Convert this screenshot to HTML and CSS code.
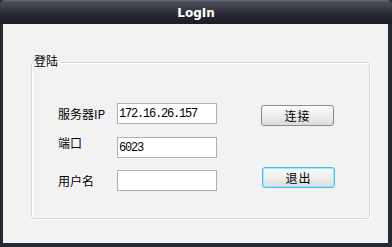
FILE: index.html
```html
<!DOCTYPE html>
<html>
	<head>
		<title>LogIn</title>
		<link rel="stylesheet" href="styles.css">
	</head>
	<body>
		<div class="window">
			<div class="titlebar">LogIn</div>
			<div class="client">
				<div class="group">
					<span class="legend">登陆</span>
					<div class="form">
						<span class="label">服务器IP</span>
						<input class="field" type="text" value="172.16.26.157">
						<button class="btn btn-top">连接</button>

						<span class="label label-up">端口</span>
						<input class="field" type="text" value="6023">
						<span></span>

						<span class="label">用户名</span>
						<input class="field" type="text" value="">
						<button class="btn btn-bottom focus">退出</button>
					</div>
				</div>
			</div>
		</div>
	</body>
</html>
```

FILE: styles.css
```css
html, body {
	margin: 0;
	padding: 0;
	background: #2a2c36;
}

.window {
	width: 392px;
	height: 247px;
	display: flex;
	flex-direction: column;
	background: #262831;
	border-radius: 5px 5px 0 0;
	overflow: hidden;
}

.titlebar {
	height: 24px;
	flex: none;
	display: flex;
	align-items: center;
	justify-content: center;
	background: linear-gradient(#6a6e7a 0px, #4a4d58 2px, #383b45 9px, #25272f 16px, #1c1d24 24px);
	color: #ffffff;
	font-family: "DejaVu Sans", sans-serif;
	font-weight: bold;
	font-size: 12px;
	padding-top: 1px;
	box-sizing: border-box;
}

.client {
	flex: 1;
	margin: 0 4px 4px 3px;
	background: #f2f2f2;
	padding: 38px 18px 0 28px;
}

.group {
	height: 155px;
	border: 1px solid #d6dadf;
	box-shadow: inset 1px 1px 0 #ffffff, 1px 1px 0 #ffffff;
	border-radius: 3px;
	font-family: "Noto Sans CJK SC", sans-serif;
	font-size: 12px;
	color: #000000;
}

.legend {
	display: block;
	width: fit-content;
	margin: -10px 0 0 1px;
	padding: 0 2px 0 1px;
	background: #f2f2f2;
	line-height: 16px;
}

.form {
	display: grid;
	grid-template-columns: 59px 144px 73px;
	grid-template-rows: 21px 21px 21px;
	row-gap: 12.5px;
	margin: 34px 0 0 26px;
	align-items: center;
}

.label {
	line-height: 14px;
}

.label-up {
	margin-top: -8px;
}

.field {
	box-sizing: border-box;
	width: 100px;
	height: 21px;
	margin: 0;
	border: 1px solid #a9b0b8;
	background: #ffffff;
	padding: 1px 0 0 1px;
	font-family: "Liberation Mono", monospace;
	font-size: 12px;
	letter-spacing: -1.2px;
	color: #000000;
	outline: none;
}

.btn {
	box-sizing: border-box;
	width: 73px;
	height: 21px;
	margin: 0;
	padding: 0;
	border: 1px solid #8c8c8c;
	border-radius: 3px;
	background: linear-gradient(#fbfbfb, #ededed 50%, #dcdcdc);
	font-family: "Noto Sans CJK SC", sans-serif;
	font-size: 12px;
	color: #000000;
	letter-spacing: 1px;
}

.btn-top {
	align-self: start;
	margin-top: 2px;
}

.btn-bottom {
	align-self: start;
	margin-top: -3px;
	margin-left: 1px;
}

.focus {
	border-color: #3cc4ec;
	box-shadow: inset 0 0 0 1px #a8e4f6;
}
```
